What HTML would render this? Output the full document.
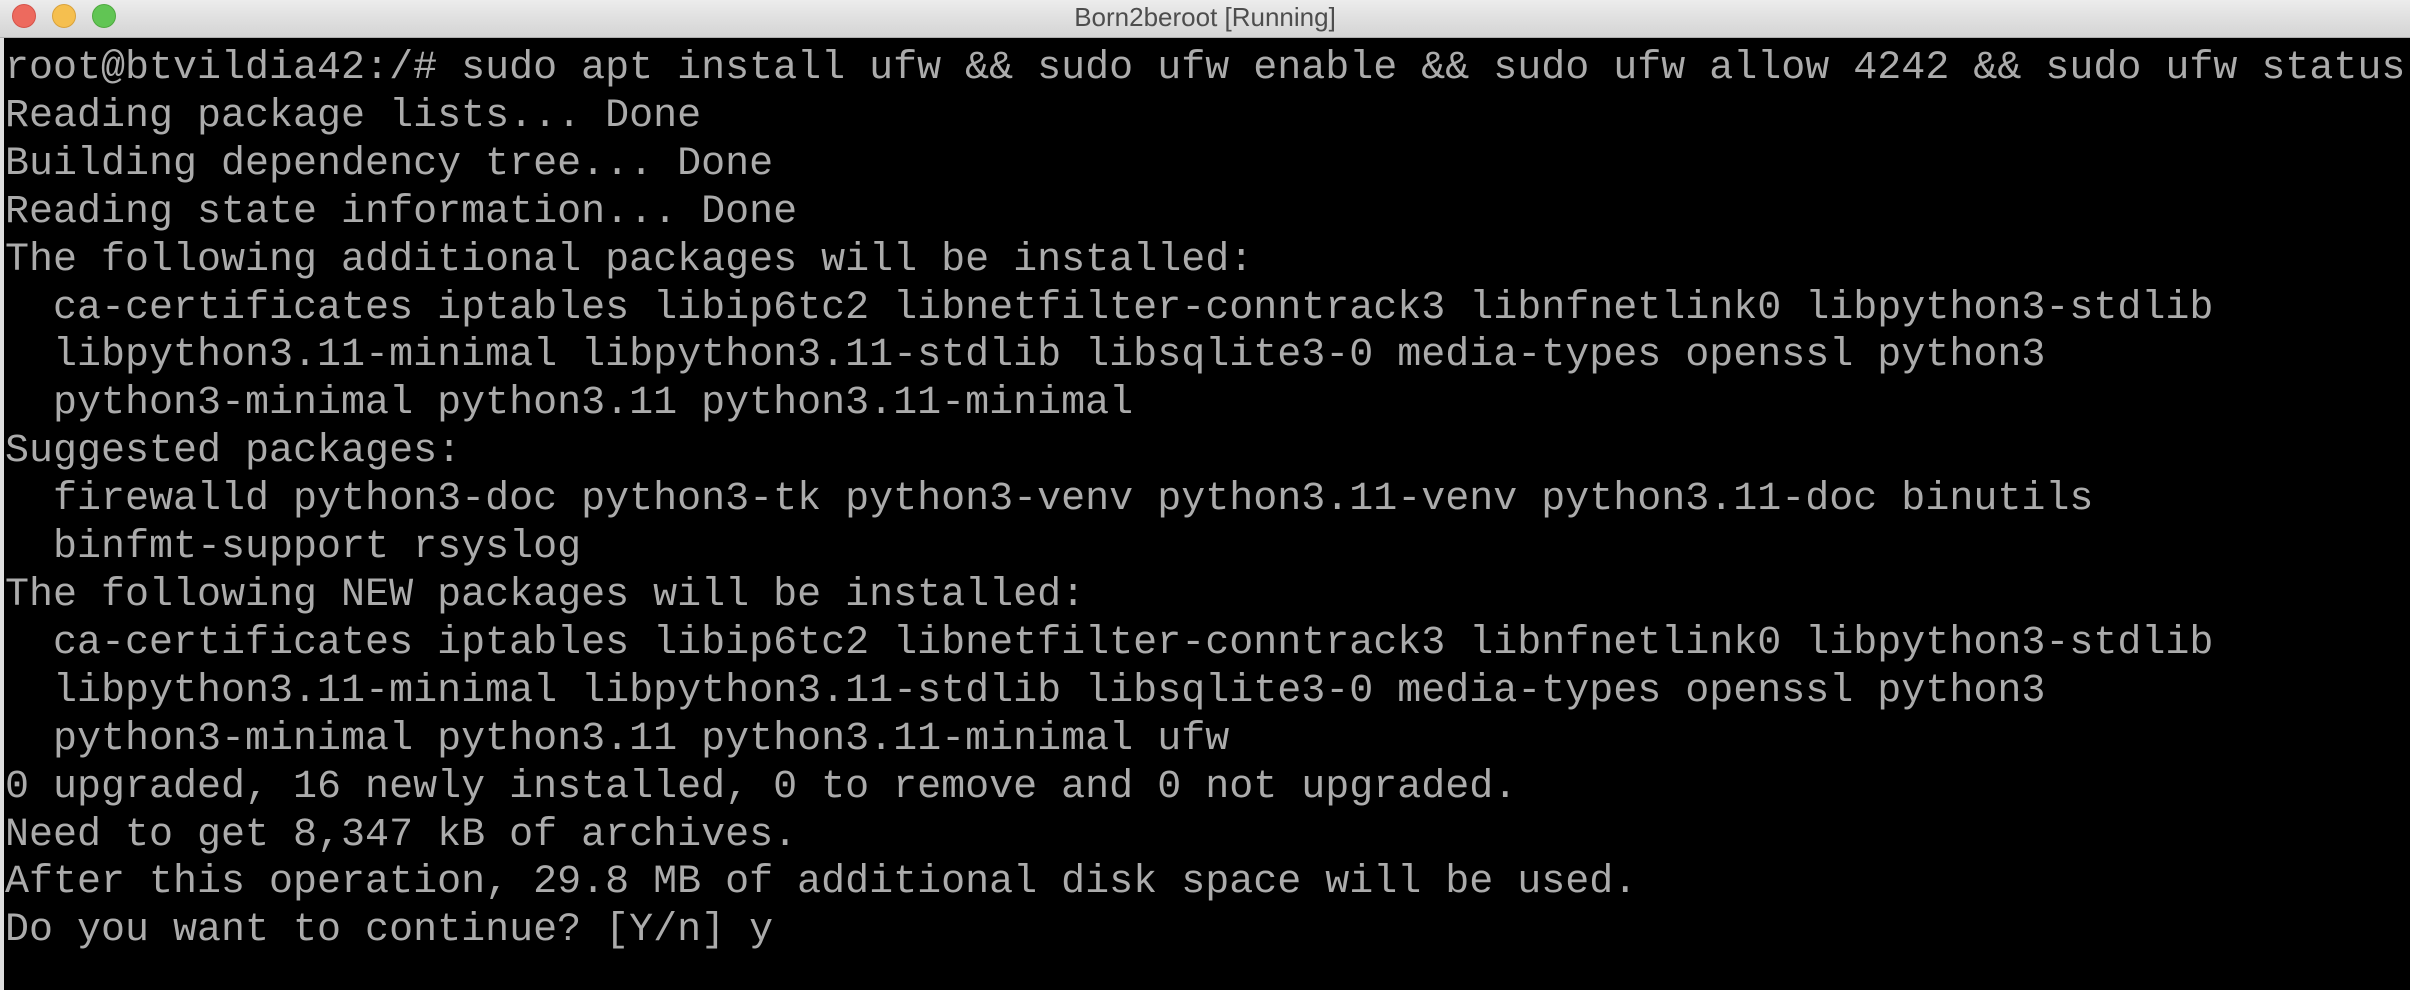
<!DOCTYPE html>
<html><head><meta charset="utf-8"><style>
html,body{margin:0;padding:0;width:2410px;height:990px;overflow:hidden;background:#000}
.bar{position:absolute;left:0;top:0;width:2410px;height:37px;background:linear-gradient(#ececec,#d4d4d4);border-bottom:1px solid #b0b0b0}
.dot{position:absolute;top:4px;width:24px;height:24px;border-radius:50%}
.title{position:absolute;left:0;right:0;top:2px;text-align:center;font:26px "Liberation Sans",sans-serif;color:#4d4d4d}
.side{position:absolute;left:0;top:38px;width:4px;height:952px;background:#e0e0e0}
.term{position:absolute;left:5px;top:45px;font:40px/47.9px "Liberation Mono",monospace;color:#ababab;white-space:pre;margin:0}
</style></head><body>
<div class="bar">
<div class="dot" style="left:12px;background:#ed6a5e;border:1px solid #d5534a;box-sizing:border-box"></div>
<div class="dot" style="left:52px;background:#f5bf4f;border:1px solid #d9a23c;box-sizing:border-box"></div>
<div class="dot" style="left:92px;background:#61c554;border:1px solid #4ea93f;box-sizing:border-box"></div>
<div class="title">Born2beroot [Running]</div>
</div>
<div class="side"></div>
<pre class="term">root@btvildia42:/# sudo apt install ufw &amp;&amp; sudo ufw enable &amp;&amp; sudo ufw allow 4242 &amp;&amp; sudo ufw status
Reading package lists... Done
Building dependency tree... Done
Reading state information... Done
The following additional packages will be installed:
  ca-certificates iptables libip6tc2 libnetfilter-conntrack3 libnfnetlink0 libpython3-stdlib
  libpython3.11-minimal libpython3.11-stdlib libsqlite3-0 media-types openssl python3
  python3-minimal python3.11 python3.11-minimal
Suggested packages:
  firewalld python3-doc python3-tk python3-venv python3.11-venv python3.11-doc binutils
  binfmt-support rsyslog
The following NEW packages will be installed:
  ca-certificates iptables libip6tc2 libnetfilter-conntrack3 libnfnetlink0 libpython3-stdlib
  libpython3.11-minimal libpython3.11-stdlib libsqlite3-0 media-types openssl python3
  python3-minimal python3.11 python3.11-minimal ufw
0 upgraded, 16 newly installed, 0 to remove and 0 not upgraded.
Need to get 8,347 kB of archives.
After this operation, 29.8 MB of additional disk space will be used.
Do you want to continue? [Y/n] y</pre>
</body></html>
